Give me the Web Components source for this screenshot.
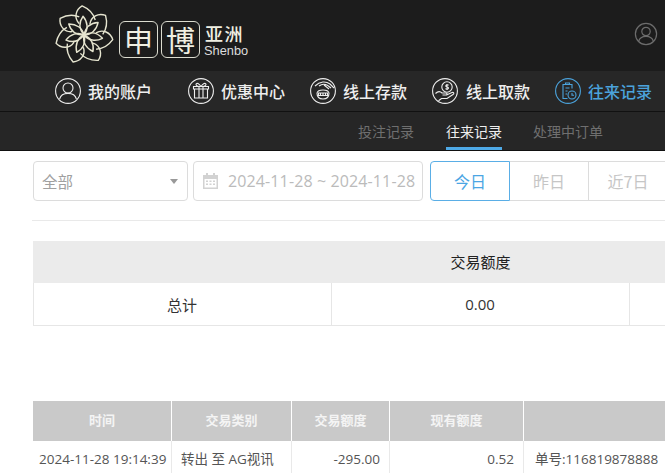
<!DOCTYPE html>
<html lang="zh"><head><meta charset="utf-8"><title>往来记录</title>
<style>
html,body{margin:0;padding:0;height:473px;overflow:hidden;background:#fff}
body{font-family:"Open Sans","Noto Sans CJK SC",sans-serif;width:665px}
</style></head><body>
<site-header></site-header>
<main-nav>
  <nav-item icon="user" class="first">我的账户</nav-item>
  <nav-item icon="gift">优惠中心</nav-item>
  <nav-item icon="deposit">线上存款</nav-item>
  <nav-item icon="withdraw" class="fourth">线上取款</nav-item>
  <nav-item icon="record" active>往来记录</nav-item>
</main-nav>
<sub-nav>
  <sub-item>投注记录</sub-item>
  <sub-item active>往来记录</sub-item>
  <sub-item class="third">处理中订单</sub-item>
</sub-nav>
<filter-bar></filter-bar>
<summary-table></summary-table>
<record-table></record-table>
<script>
const FONT='"Open Sans","Noto Sans CJK SC",sans-serif';
const CJK='"Noto Sans CJK SC","Open Sans",sans-serif';
function def(name,html){
  customElements.define(name,class extends HTMLElement{
    constructor(){super();this.attachShadow({mode:'open'}).innerHTML=html;}
  });
}
const petals=[0,51.4,102.9,154.3,205.7,257.1,308.6].map(a=>`<g transform="rotate(${a})"><path d="M0 0C-5-6-6-13-1-20C4-14 5-6 0 0Z"/><path d="M-5-12C-11-18-9-27-2-31C5-28 10-23 12-16"/></g>`).join('');
def('site-header',`<style>
:host{display:flex;align-items:center;height:71px;box-sizing:border-box;background:#1c1c1c;padding-left:54px;color:#f0efe2;font-family:${CJK}}
svg.logo{width:60px;height:60px;flex:none;margin-top:-2px;margin-right:5px}
.box{width:39px;height:37px;box-sizing:border-box;border:1px solid #dcdcd0;border-radius:6px;display:flex;align-items:center;justify-content:center;font-size:29px;line-height:1;margin-right:3px;margin-top:8px;font-weight:400}
.txt{display:flex;flex-direction:column;margin-left:1px;margin-top:9px}
.zh{font-size:18px;line-height:21px;letter-spacing:1.500px;font-weight:500;margin-left:1px}
.en{font-size:12.800px;line-height:14px;color:#ddd;font-family:"Liberation Sans",sans-serif}
.me{margin-left:auto;margin-right:7px;margin-top:-4px;width:24px;height:24px;flex:none}
</style>
<svg class="logo" viewBox="-32 -32 64 64" fill="none" stroke="#e6e5d0" stroke-width="1.5" stroke-linejoin="round">${petals}</svg>
<div class="box">申</div><div class="box">博</div>
<div class="txt"><span class="zh">亚洲</span><span class="en">Shenbo</span></div>
<svg class="me" viewBox="0 0 24 24" fill="none" stroke="#6c6c6c" stroke-width="1.2"><circle cx="12" cy="12" r="10.600"/><circle cx="12" cy="9.500" r="4.200"/><path d="M4.600 19.500C5.500 16 8 14.400 12 14.400S18.500 16 19.400 19.500"/></svg>`);

def('main-nav',`<style>
:host{display:flex;align-items:center;height:41px;box-sizing:border-box;background:#272727;border-bottom:1px solid #111;padding-left:55px;gap:25px}
::slotted(.first){margin-right:11px}
</style><slot></slot>`);

const icons={
user:`<circle cx="13" cy="10" r="5"/><path d="M4.600 21C5.600 17 8.600 15.400 13 15.400S20.400 17 21.400 21"/>`,
gift:`<path d="M6.500 11H19.500V20H6.500ZM5.500 8.500H20.500V11H5.500ZM11 8.500V20M15 8.500V20M13 8.500C11 5.500 8.500 4.500 8 6.200 7.600 7.700 10 8.500 13 8.500 16 8.500 18.400 7.700 18 6.200 17.500 4.500 15 5.500 13 8.500Z"/>`,
deposit:`<path d="M5 8C10 3 16 3 20 6L24 10M9 8C13 5 17 6 21 10M14 7L19 11M7 15C7.500 12.800 10 12 13 12S18.500 12.800 19 15C19 18.500 16.800 21 13 21S7 18.500 7 15Z"/><path d="M8.500 15H17.500V17.500H8.500ZM10.500 15V17.500M13 15V17.500M15.500 15V17.500"/>`,
withdraw:`<circle cx="15" cy="9" r="5.200"/><path d="M15 6V12M16.600 7.300C15.500 6.400 13.600 6.800 13.800 8.100 14 9.400 16.400 8.600 16.500 10 16.500 11.300 14.500 11.500 13.400 10.600"/><path d="M3.500 15.500C6 13 8.500 13.500 10 15H14C15.500 15 15.500 17 14 17H10.500M14.500 17L20 14.500C21.800 14 22.500 15.500 21 16.500L15 20.500H9.500L6.500 22.800"/>`,
record:`<path d="M17 10.500V6.500H8V20.500H12.500M10.500 6.500V5H14.500V6.500M10.500 10H14.500M10.500 13H12.500M10.500 16H12"/><circle cx="17" cy="17" r="4"/><path d="M17 15V17.300H19"/>`};
customElements.define('nav-item',class extends HTMLElement{
 constructor(){super();const a=this.hasAttribute('active');const c=a?'#4ba3dc':'#eee';
 const g=this.classList.contains('fourth')?8:7;
 this.attachShadow({mode:'open'}).innerHTML=`<style>
 :host{display:flex;align-items:center;gap:${g}px;font:500 16px/26px ${CJK};color:${c};white-space:nowrap}
 svg{width:26px;height:26px;flex:none}
 </style><svg viewBox="0 0 26 26" fill="none" stroke="${c}" stroke-width="1.100"><circle cx="13" cy="13" r="12.400"/>${icons[this.getAttribute('icon')]}</svg><slot></slot>`;}
});
def('sub-nav',`<style>
:host{display:flex;height:39px;box-sizing:border-box;background:#262626;border-bottom:1px solid #111;padding-left:358px;gap:32px}
::slotted(.third){margin-left:-1px}
</style><slot></slot>`);
customElements.define('sub-item',class extends HTMLElement{
 constructor(){super();const a=this.hasAttribute('active');
 this.attachShadow({mode:'open'}).innerHTML=`<style>
 :host{display:block;box-sizing:border-box;height:38px;font:14px/38px ${CJK};color:${a?'#eee':'#6f6f6f'};${a?'border-bottom:3px solid #4ea9e6;':''}white-space:nowrap}
 </style><slot></slot>`;}
});
def('filter-bar',`<style>
:host{display:block;margin-left:32px;padding:10px 0 19px 1px;border-bottom:1px solid #e9e9e9;width:633px;box-sizing:border-box;height:70px;overflow:hidden;color:#b5b5b5;font-family:${FONT}}
.row{display:flex;width:800px}
.ctl{box-sizing:border-box;height:40px;border:1px solid #dcdcdc;border-radius:4px;display:flex;align-items:center;background:#fff}
.sel{width:155px;padding:0 8px;font-family:${CJK};font-size:15.500px;color:#a0a0a0;justify-content:space-between;margin-right:5px}
.arr{width:0;height:0;border:4px solid transparent;border-top:5px solid #999;border-bottom:0;margin-right:1px}
.date{width:230px;padding:0 8px;font-size:16px;gap:9px;color:#bbb;margin-right:7px;white-space:nowrap;letter-spacing:.12px}
.date svg{width:17px;height:18px;flex:none}
.tabs{display:flex}
.tab{box-sizing:border-box;height:40px;width:79px;border:1px solid #dcdcdc;border-left:0;display:flex;align-items:center;justify-content:center;font-family:${CJK};font-size:16px;color:#c6c6c6}
.tab.on{width:80px;border:1px solid #5aaee6;border-radius:4px 0 0 4px;color:#4ba6e4}
</style><div class="row">
<div class="ctl sel"><span>全部</span><i class="arr"></i></div>
<div class="ctl date"><svg viewBox="0 0 17 18" fill="#d2d2d2"><path d="M1 3H4V1H6V3H11V1H13V3H16V17H1ZM2.500 7V15.500H14.500V7Z"/><path d="M4 8.500H6V10H4ZM7.500 8.500H9.500V10H7.500ZM11 8.500H13V10H11ZM4 11.500H6V13H4ZM7.500 11.500H9.500V13H7.500ZM11 11.500H13V13H11Z"/></svg><span>2024-11-28 ~ 2024-11-28</span></div>
<div class="tabs"><div class="tab on">今日</div><div class="tab">昨日</div><div class="tab">近7日</div></div>
</div>`);
def('summary-table',`<style>
:host{display:block;margin:20px 0 0 33px;width:660px;font:15px ${CJK};color:#333}
.g{display:grid;grid-template-columns:299px 298px 63px;text-align:center}
.h{height:42px;line-height:42px;background:#ebebeb;color:#222;box-sizing:border-box;padding-right:1px}
.c{height:43px;line-height:43px;box-sizing:border-box;border-bottom:1px solid #e6e6e6;border-right:1px solid #e6e6e6;padding-right:1px}
.n{font-family:${FONT}}
.l{border-left:1px solid #e6e6e6}
</style><div class="g"><div class="h"></div><div class="h">交易额度</div><div class="h"></div><div class="c l">总计</div><div class="c n">0.00</div><div class="c"></div></div>`);
def('record-table',`<style>
:host{display:block;margin:75px 0 0 33px;width:660px;font:13.500px ${FONT};color:#555}
.g{display:grid;grid-template-columns:139px 120px 98px 134px 169px}
.h{height:40px;box-sizing:border-box;background:#c9c9c9;color:#f4f4f4;text-align:center;font:700 13px/38px ${CJK};border-right:1px solid #fff}
.c{height:32px;line-height:36px;box-sizing:border-box;padding:0 9px;border-right:1px solid #e9e9e9;white-space:nowrap;overflow:hidden}
.c.a{padding:0 6px}.r{text-align:right}
.m{padding-left:11px}
</style><div class="g">
<div class="h">时间</div><div class="h">交易类别</div><div class="h">交易额度</div><div class="h">现有额度</div><div class="h"></div>
<div class="c a">2024-11-28 19:14:39</div><div class="c">转出 至 AG视讯</div><div class="c r">-295.00</div><div class="c r">0.52</div><div class="c m">单号:116819878888</div>
</div>`);
</script>
</body></html>
